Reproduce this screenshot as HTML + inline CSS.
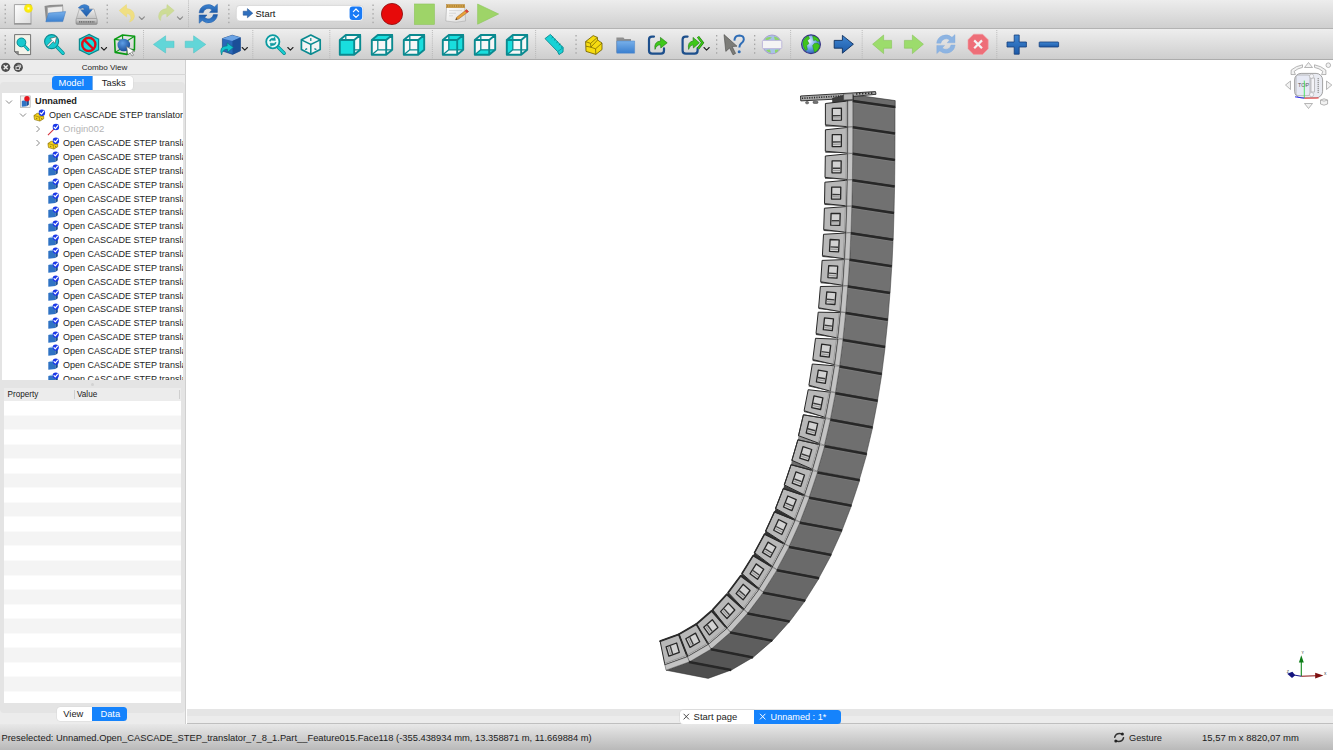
<!DOCTYPE html>
<html><head><meta charset="utf-8"><title>FreeCAD</title>
<style>
*{box-sizing:border-box;margin:0;padding:0}
html,body{width:1333px;height:750px;overflow:hidden;background:#fff}
body{font-family:"Liberation Sans",sans-serif;font-size:10.5px;color:#1a1a1a;position:relative}
.abs{position:absolute}
#tb1{left:0;top:0;width:1333px;height:29px;background:linear-gradient(#ededed,#cfcfcf);border-bottom:1px solid #b3b3b3}
#tb2{left:0;top:29px;width:1333px;height:31px;background:linear-gradient(#eeeeee,#cecece);border-bottom:1.4px solid #acacac}
.ic{position:absolute}
.dots{position:absolute;width:2px;border-left:1.5px dotted #a9a9a9}
#left{left:0;top:60px;width:186px;height:664px;background:#ececec;border-right:1px solid #d0d0d0}
#cvtitle{left:0;top:60px;width:186px;height:15px;border-bottom:1px solid #d6d6d6;text-align:center;font-size:8.1px;line-height:15.5px;padding-left:23px;color:#262626}
#pane{left:0;top:82px;width:185px;height:631px;background:#e4e4e4;border-radius:4px}
.seg{position:absolute;height:14px;line-height:14.5px;font-size:9.3px;text-align:center;background:#fff;color:#1a1a1a}
.seg.on{background:#1583fc;color:#fff}
#tree{left:2px;top:93px;width:181.3px;height:287px;background:#fff;overflow:hidden}
.row{position:absolute;left:0;height:14px;line-height:14px;white-space:nowrap;font-size:9.0px;color:#1c1c1c}
#prop{left:4px;top:388px;width:177px;height:315px;background:#fff;overflow:hidden;
 background-image:repeating-linear-gradient(#fff 0,#fff 14.55px,#f4f4f4 14.55px,#f4f4f4 29.1px);background-position:0 12.5px;background-repeat:repeat}
#prophead{left:4px;top:388px;width:177px;height:12.5px;background:#ececec;font-size:8.15px;line-height:13px}
#view{left:187px;top:60px;width:1146px;height:649px;background:#fff}
#mditabs{left:187px;top:709px;width:1146px;height:15px;background:linear-gradient(#e5e5e5 0,#e5e5e5 48%,#ececec 52%,#ececec 100%);border-bottom:1px solid #bfbfbf}
#status{left:0;top:724px;width:1333px;height:26px;background:linear-gradient(#e8e8e8,#b9b9b9);font-size:10.3px;line-height:27px}
</style></head><body>
<div id="tb1" class="abs"></div>
<div id="tb2" class="abs"></div>
<svg class="abs" style="left:0;top:0" width="1333" height="60" viewBox="0 0 1333 60">
<defs>
<linearGradient id="gb" x1="0" y1="0" x2="0" y2="1"><stop offset="0" stop-color="#78b0ea"/><stop offset="1" stop-color="#3a7fcf"/></linearGradient>
<linearGradient id="gb2" x1="0" y1="0" x2="0" y2="1"><stop offset="0" stop-color="#3f86d2"/><stop offset="1" stop-color="#1d5aa8"/></linearGradient>
<linearGradient id="gp" x1="0" y1="0" x2="1" y2="1"><stop offset="0" stop-color="#ffffff"/><stop offset="1" stop-color="#dcdcdc"/></linearGradient>
<linearGradient id="gg" x1="0" y1="0" x2="0" y2="1"><stop offset="0" stop-color="#e2e2e2"/><stop offset="1" stop-color="#8e8e8e"/></linearGradient>
<linearGradient id="gdrv" x1="0" y1="0" x2="0" y2="1"><stop offset="0" stop-color="#f0f0f0"/><stop offset="1" stop-color="#c2c2c2"/></linearGradient>
<radialGradient id="gy" cx="0.5" cy="0.5" r="0.5"><stop offset="0" stop-color="#fffde0"/><stop offset="0.45" stop-color="#fff200"/><stop offset="1" stop-color="#f4e000" stop-opacity="0.85"/></radialGradient>
<radialGradient id="gsph" cx="0.4" cy="0.35" r="0.7"><stop offset="0" stop-color="#5f9fe6"/><stop offset="1" stop-color="#164a96"/></radialGradient>
<radialGradient id="gglobe" cx="0.4" cy="0.35" r="0.75"><stop offset="0" stop-color="#e8f2ff"/><stop offset="0.5" stop-color="#6aa5e8"/><stop offset="1" stop-color="#1c4fa3"/></radialGradient>
</defs>
<rect x="4.6" y="4.5" width="1.3" height="1.5" fill="#a6a6a6"/><rect x="4.6" y="8.8" width="1.3" height="1.5" fill="#a6a6a6"/><rect x="4.6" y="13.1" width="1.3" height="1.5" fill="#a6a6a6"/><rect x="4.6" y="17.4" width="1.3" height="1.5" fill="#a6a6a6"/><rect x="4.6" y="21.7" width="1.3" height="1.5" fill="#a6a6a6"/>
<path d="M14.4 4.6 H31 V23.6 H14.4 Z" fill="url(#gp)" stroke="#9b9b9b" stroke-width="0.9"/><path d="M14 24 H31.4" stroke="#8a8a8a" stroke-width="1.1"/><circle cx="28.4" cy="8.4" r="4.3" fill="url(#gy)"/>
<path d="M44.5 6 L50 5 L63 4.6 L63.6 19 L46 21 Z" fill="#8d8d8d"/><path d="M47.5 7.4 L62.6 6.2 L62.8 18 L48 20 Z" fill="#ececec" stroke="#a5a5a5" stroke-width="0.5"/><path d="M48.6 13 L65.6 11.6 L62.8 21.6 L45.8 21.8 Z" fill="url(#gb)" stroke="#3f78bd" stroke-width="0.5"/>
<path d="M79.4 9 H94 L97 19 H76.2 Z" fill="url(#gdrv)" stroke="#9a9a9a" stroke-width="0.6"/><rect x="76" y="18.6" width="21.2" height="5.8" rx="1.2" fill="url(#gg)" stroke="#858585" stroke-width="0.6"/><path d="M79 21.8 H94.4" stroke="#5e5e5e" stroke-width="1.2" stroke-dasharray="1.2 0.6"/><path d="M78.2 7.8 Q83.6 2.2 88.8 6.2 L89.2 9.4 L92.4 9.4 L86.4 16.6 L80.6 9.8 L84.2 9.8 Q84 6.6 80.4 8.8 Z" fill="url(#gb2)" stroke="#2a62a8" stroke-width="0.4"/>
<rect x="106.6" y="4.5" width="1.3" height="1.5" fill="#a6a6a6"/><rect x="106.6" y="8.8" width="1.3" height="1.5" fill="#a6a6a6"/><rect x="106.6" y="13.1" width="1.3" height="1.5" fill="#a6a6a6"/><rect x="106.6" y="17.4" width="1.3" height="1.5" fill="#a6a6a6"/><rect x="106.6" y="21.7" width="1.3" height="1.5" fill="#a6a6a6"/>
<path d="M119.2 10.6 L126.4 4.6 L126.6 8.6 Q134.6 9.4 134.4 16.6 Q134 20.6 129.6 22 Q132 18 130.4 15.6 Q129 13.4 126.6 13.6 L126.6 17 Z" fill="#f1df7e" stroke="#ecd96a" stroke-width="0.5" opacity="0.95"/>
<path d="M139.2 16.9 l2.6 2.6 l2.6 -2.6" fill="none" stroke="#8c8c8c" stroke-width="1.1" stroke-linecap="round" stroke-linejoin="round"/>
<path d="M174.2 10.6 L167 4.6 L166.8 8.6 Q158.8 9.4 158.6 16.6 Q158.8 19.6 160.4 20.4 Q160.6 15.4 163.4 14.2 Q165 13.6 166.8 13.8 L166.8 17 Z" fill="#cddc93" stroke="#c3d484" stroke-width="0.5" opacity="0.95"/>
<path d="M177.4 16.9 l2.6 2.6 l2.6 -2.6" fill="none" stroke="#8c8c8c" stroke-width="1.1" stroke-linecap="round" stroke-linejoin="round"/>
<line x1="188.5" y1="0.5" x2="188.5" y2="28.5" stroke="#b4b4b4" stroke-width="0.9" stroke-dasharray="1 1.1"/>
<g fill="url(#gb2)" stroke="#1c58a4" stroke-width="0.5"><path d="M199.1 12.8 A9.2 9.2 0 0 1 214.4 6.9 L217.4 4.2 L217.4 12.4 L209.6 12.4 L211.9 9.9 A5.2 5.2 0 0 0 203.2 12.8 Z"/><path transform="rotate(180 208.3 13.7)" d="M199.1 12.8 A9.2 9.2 0 0 1 214.4 6.9 L217.4 4.2 L217.4 12.4 L209.6 12.4 L211.9 9.9 A5.2 5.2 0 0 0 203.2 12.8 Z"/></g>
<rect x="228.2" y="4.5" width="1.3" height="1.5" fill="#a6a6a6"/><rect x="228.2" y="8.8" width="1.3" height="1.5" fill="#a6a6a6"/><rect x="228.2" y="13.1" width="1.3" height="1.5" fill="#a6a6a6"/><rect x="228.2" y="17.4" width="1.3" height="1.5" fill="#a6a6a6"/><rect x="228.2" y="21.7" width="1.3" height="1.5" fill="#a6a6a6"/>
<rect x="236.3" y="5.4" width="127" height="15.6" rx="3.6" fill="#fff" stroke="#c9c9c9" stroke-width="0.6"/>
<path d="M243.2 11.2 H247.4 V8.6 L252.8 13.2 L247.4 17.8 V15.2 H243.2 Z" fill="#2f6fbe" stroke="#1b4a8c" stroke-width="0.5"/>
<text x="255.6" y="16.8" font-family="Liberation Sans, sans-serif" font-size="9.37" fill="#111">Start</text>
<rect x="349.6" y="6.4" width="12.6" height="13.6" rx="3" fill="#1a7bf6"/><path d="M353.4 11.6 L356 9 L358.6 11.6 M353.4 14.8 L356 17.4 L358.6 14.8" fill="none" stroke="#fff" stroke-width="1.2" stroke-linecap="round" stroke-linejoin="round"/>
<rect x="372.4" y="4.5" width="1.3" height="1.5" fill="#a6a6a6"/><rect x="372.4" y="8.8" width="1.3" height="1.5" fill="#a6a6a6"/><rect x="372.4" y="13.1" width="1.3" height="1.5" fill="#a6a6a6"/><rect x="372.4" y="17.4" width="1.3" height="1.5" fill="#a6a6a6"/><rect x="372.4" y="21.7" width="1.3" height="1.5" fill="#a6a6a6"/>
<circle cx="392" cy="14" r="10.6" fill="#e70a0a" stroke="#8c0a0a" stroke-width="0.8"/>
<rect x="414.4" y="4" width="20" height="20.4" fill="#9ed468" stroke="#8dc45a" stroke-width="0.6"/>
<path d="M446.6 6.4 H464.6 L465.6 21 Q456 23.4 445.8 21 Z" fill="url(#gp)" stroke="#aaa" stroke-width="0.6"/><rect x="446.4" y="4.4" width="18.4" height="3.4" fill="#d9a648" stroke="#a8792c" stroke-width="0.4"/><path d="M447 6 H464.4" stroke="#7a5a20" stroke-width="1" stroke-dasharray="0.8 1"/><path d="M449 10.6 H462 M449 13.2 H456 M449 15.8 H453" stroke="#c4c4c4" stroke-width="0.6"/><path d="M466.6 9.6 L468.6 11.6 L458.6 19 L455.6 19.8 L456.8 17.2 Z" fill="#e8a33a" stroke="#9c5a14" stroke-width="0.5"/><path d="M466.6 9.6 L468.6 11.6 L466.8 12.9 L464.9 10.9 Z" fill="#d94040"/><path d="M455.6 19.8 L456.4 18.2 L457.4 19.2 Z" fill="#222"/>
<path d="M477.6 4 L498.6 14 L477.6 24.2 Z" fill="#9ed468" stroke="#8cc65a" stroke-width="0.6"/>
<rect x="4.6" y="35.0" width="1.3" height="1.5" fill="#a6a6a6"/><rect x="4.6" y="39.3" width="1.3" height="1.5" fill="#a6a6a6"/><rect x="4.6" y="43.6" width="1.3" height="1.5" fill="#a6a6a6"/><rect x="4.6" y="47.9" width="1.3" height="1.5" fill="#a6a6a6"/><rect x="4.6" y="52.2" width="1.3" height="1.5" fill="#a6a6a6"/>
<path d="M14.6 34.6 H30.6 V54.6 H18.4 L14.6 51.6 Z" fill="#f3f3ea" stroke="#555" stroke-width="0.8"/><path d="M14.6 51.6 L18.4 51.4 L18.4 54.6 Z" fill="#8a8a8a" stroke="#555" stroke-width="0.5"/><line x1="24.4" y1="45.6" x2="28.2" y2="49.8" stroke="#0a8a90" stroke-width="2.8" stroke-linecap="round"/><line x1="24.4" y1="45.6" x2="28.2" y2="49.8" stroke="#19cfd2" stroke-width="1.6" stroke-linecap="round"/><circle cx="21.4" cy="42.4" r="4.4" fill="#17c9cf" stroke="#0a8a90" stroke-width="1"/>
<line x1="56.6" y1="46.6" x2="63" y2="53.2" stroke="#0a8a90" stroke-width="3.6" stroke-linecap="round"/><line x1="56.6" y1="46.6" x2="63" y2="53.2" stroke="#19cfd2" stroke-width="2.2" stroke-linecap="round"/><circle cx="51.6" cy="41.6" r="7" fill="#17c9cf" stroke="#0a8a90" stroke-width="1.1"/><path d="M47 45.4 L52 40.4 L50 38.4 L56.6 36.8 L55 43.4 L53.2 41.6 L48.2 46.6 Z" fill="#fff" stroke="#4a4a4a" stroke-width="0.6" stroke-linejoin="round"/>
<polygon points="89,34.4 98.6,39.2 98.6,49.8 89,54.6 79.4,49.8 79.4,39.2" fill="#18dede" stroke="#0a8a90" stroke-width="1.2"/><circle cx="88.8" cy="44.4" r="6.6" fill="none" stroke="#e0101a" stroke-width="2.4"/><line x1="84.2" y1="39.8" x2="93.4" y2="49" stroke="#e0101a" stroke-width="2.4"/>
<path d="M101.4 47.5 l2.6 2.6 l2.6 -2.6" fill="none" stroke="#222" stroke-width="1.1" stroke-linecap="round" stroke-linejoin="round"/>
<path d="M114.6 39.4 L122.6 35 L134.6 36.2 L134.4 49.8 L127 54.4 L115.2 52.4 Z" fill="none" stroke="#0a9a14" stroke-width="1.6" stroke-linejoin="round"/><path d="M114.6 39.4 L127 41 L134.6 36.2 M127 41 L127 54.4 M122.6 35 L122.6 47.6 L115.2 52.4 M122.6 47.6 L134.4 49.8" fill="none" stroke="#0a9a14" stroke-width="1.1"/><circle cx="123.8" cy="45" r="6.3" fill="url(#gsph)"/><path d="M126.6 46.6 L134.8 51.4 L131.6 52 L133.6 55.2 L132 56 L130.2 52.8 L128 54.8 Z" fill="#fff" stroke="#666" stroke-width="0.6"/>
<line x1="143.5" y1="30.0" x2="143.5" y2="58.5" stroke="#b4b4b4" stroke-width="0.9" stroke-dasharray="1 1.1"/>
<path d="M153.4 44.4 L165.6 35.8 V41.2 H174 V47.6 H165.6 V53 Z" fill="#62d6d8" stroke="#48c0c4" stroke-width="0.5"/>
<path d="M205.8 44.4 L193.6 35.8 V41.2 H185.2 V47.6 H193.6 V53 Z" fill="#62d6d8" stroke="#48c0c4" stroke-width="0.5"/>
<path d="M222.4 38.6 L232.2 35.2 L240.4 37.6 L240.4 50.8 L232.6 54.4 L222.4 51 Z" fill="#2a68b8" stroke="#123c78" stroke-width="0.6"/><path d="M222.4 38.6 L232.2 35.2 L240.4 37.6 L232.4 41 Z" fill="#6ba3e4"/><path d="M232.4 41 L240.4 37.6 L240.4 50.8 L232.6 54.4 Z" fill="#1b4f98"/><path d="M221.6 55 Q218.4 46.4 227.2 45.8 L227 42.8 L233.4 47.4 L227.6 52.2 L227.4 49.2 Q222.6 49 221.6 55 Z" fill="#12c4cc" stroke="#0a6e78" stroke-width="0.6"/>
<path d="M242.2 47.5 l2.6 2.6 l2.6 -2.6" fill="none" stroke="#222" stroke-width="1.1" stroke-linecap="round" stroke-linejoin="round"/>
<line x1="252.8" y1="30.0" x2="252.8" y2="58.5" stroke="#b4b4b4" stroke-width="0.9" stroke-dasharray="1 1.1"/>
<line x1="278.2" y1="47.2" x2="284.2" y2="53.2" stroke="#0a8a90" stroke-width="3.4" stroke-linecap="round"/><line x1="278.2" y1="47.2" x2="284.2" y2="53.2" stroke="#19cfd2" stroke-width="2" stroke-linecap="round"/><circle cx="272.8" cy="41.8" r="6.6" fill="#ecfbfb" stroke="#0a9aa0" stroke-width="1.8"/><path d="M269.4 41 Q270.2 37.8 273.6 38.2 L274.8 37 L275.4 40.4 L272 40.2 L272.8 39.4 Q271 39.4 270.6 41.2 Z M276.2 42.6 Q275.4 45.8 272 45.4 L270.8 46.6 L270.2 43.2 L273.6 43.4 L272.8 44.2 Q274.6 44.2 275 42.4 Z" fill="#0aa0a8" stroke="#0a8a90" stroke-width="0.5"/>
<path d="M287.8 47.5 l2.6 2.6 l2.6 -2.6" fill="none" stroke="#222" stroke-width="1.1" stroke-linecap="round" stroke-linejoin="round"/>
<polygon points="310.8,35.0 320.2,39.8 320.2,49.4 310.8,54.2 301.4,49.4 301.4,39.8" fill="#f4f4f4" stroke="#0a8a90" stroke-width="1.7" stroke-linejoin="round"/><path d="M301.4 39.8 L310.8 44.4 L320.2 39.8 M310.8 44.4 L310.8 54.2" fill="none" stroke="#0a8a90" stroke-width="1.5"/><path d="M310.8 38.0 V41.0 M305.2 49.6 l2 -1 M316.4 49.6 l-2 -1" stroke="#0a8a90" stroke-width="1.2"/>
<line x1="329.8" y1="30.0" x2="329.8" y2="58.5" stroke="#b4b4b4" stroke-width="0.9" stroke-dasharray="1 1.1"/>
<polygon points="339.8,40.0 345.8,35.0 360.2,35.0 360.2,49.8 354.2,54.8 339.8,54.8" fill="#f7f7f7"/><path d="M345.8 35.0 L345.8 49.8 L360.2 49.8 M345.8 49.8 L339.8 54.8" fill="none" stroke="#0a8a90" stroke-width="1.3"/><polygon points="339.8,40.0 354.2,40.0 354.2,54.8 339.8,54.8" fill="#19dede"/><path d="M339.8 40.0 L354.2 40.0 M354.2 40.0 L354.2 54.8 M354.2 54.8 L339.8 54.8 M339.8 54.8 L339.8 40.0 M339.8 40.0 L345.8 35.0 M345.8 35.0 L360.2 35.0 M360.2 35.0 L354.2 40.0 M360.2 35.0 L360.2 49.8 M360.2 49.8 L354.2 54.8 " fill="none" stroke="#0a8a90" stroke-width="1.9" stroke-linejoin="round" stroke-linecap="round"/>
<polygon points="371.8,40.0 377.8,35.0 392.2,35.0 392.2,49.8 386.2,54.8 371.8,54.8" fill="#f7f7f7"/><path d="M377.8 35.0 L377.8 49.8 L392.2 49.8 M377.8 49.8 L371.8 54.8" fill="none" stroke="#0a8a90" stroke-width="1.3"/><polygon points="371.8,40.0 377.8,35.0 392.2,35.0 386.2,40.0" fill="#19dede"/><path d="M371.8 40.0 L386.2 40.0 M386.2 40.0 L386.2 54.8 M386.2 54.8 L371.8 54.8 M371.8 54.8 L371.8 40.0 M371.8 40.0 L377.8 35.0 M377.8 35.0 L392.2 35.0 M392.2 35.0 L386.2 40.0 M392.2 35.0 L392.2 49.8 M392.2 49.8 L386.2 54.8 " fill="none" stroke="#0a8a90" stroke-width="1.9" stroke-linejoin="round" stroke-linecap="round"/>
<polygon points="403.8,40.0 409.8,35.0 424.2,35.0 424.2,49.8 418.2,54.8 403.8,54.8" fill="#f7f7f7"/><path d="M409.8 35.0 L409.8 49.8 L424.2 49.8 M409.8 49.8 L403.8 54.8" fill="none" stroke="#0a8a90" stroke-width="1.3"/><polygon points="418.2,40.0 424.2,35.0 424.2,49.8 418.2,54.8" fill="#19dede"/><path d="M403.8 40.0 L418.2 40.0 M418.2 40.0 L418.2 54.8 M418.2 54.8 L403.8 54.8 M403.8 54.8 L403.8 40.0 M403.8 40.0 L409.8 35.0 M409.8 35.0 L424.2 35.0 M424.2 35.0 L418.2 40.0 M424.2 35.0 L424.2 49.8 M424.2 49.8 L418.2 54.8 " fill="none" stroke="#0a8a90" stroke-width="1.9" stroke-linejoin="round" stroke-linecap="round"/>
<line x1="432.4" y1="30.0" x2="432.4" y2="58.5" stroke="#b4b4b4" stroke-width="0.9" stroke-dasharray="1 1.1"/>
<polygon points="442.8,40.0 448.8,35.0 463.2,35.0 463.2,49.8 457.2,54.8 442.8,54.8" fill="#f7f7f7"/><polygon points="448.8,35.0 463.2,35.0 463.2,49.8 448.8,49.8" fill="#19dede"/><path d="M448.8 35.0 L448.8 49.8 L463.2 49.8 M448.8 49.8 L442.8 54.8" fill="none" stroke="#0a8a90" stroke-width="1.3"/><path d="M442.8 40.0 L457.2 40.0 M457.2 40.0 L457.2 54.8 M457.2 54.8 L442.8 54.8 M442.8 54.8 L442.8 40.0 M442.8 40.0 L448.8 35.0 M448.8 35.0 L463.2 35.0 M463.2 35.0 L457.2 40.0 M463.2 35.0 L463.2 49.8 M463.2 49.8 L457.2 54.8 " fill="none" stroke="#0a8a90" stroke-width="1.9" stroke-linejoin="round" stroke-linecap="round"/>
<polygon points="474.8,40.0 480.8,35.0 495.2,35.0 495.2,49.8 489.2,54.8 474.8,54.8" fill="#f7f7f7"/><polygon points="474.8,54.8 480.8,49.8 495.2,49.8 489.2,54.8" fill="#19dede"/><path d="M480.8 35.0 L480.8 49.8 L495.2 49.8 M480.8 49.8 L474.8 54.8" fill="none" stroke="#0a8a90" stroke-width="1.3"/><path d="M474.8 40.0 L489.2 40.0 M489.2 40.0 L489.2 54.8 M489.2 54.8 L474.8 54.8 M474.8 54.8 L474.8 40.0 M474.8 40.0 L480.8 35.0 M480.8 35.0 L495.2 35.0 M495.2 35.0 L489.2 40.0 M495.2 35.0 L495.2 49.8 M495.2 49.8 L489.2 54.8 " fill="none" stroke="#0a8a90" stroke-width="1.9" stroke-linejoin="round" stroke-linecap="round"/>
<polygon points="506.8,40.0 512.8,35.0 527.2,35.0 527.2,49.8 521.2,54.8 506.8,54.8" fill="#f7f7f7"/><polygon points="506.8,40.0 512.8,35.0 512.8,49.8 506.8,54.8" fill="#19dede"/><path d="M512.8 35.0 L512.8 49.8 L527.2 49.8 M512.8 49.8 L506.8 54.8" fill="none" stroke="#0a8a90" stroke-width="1.3"/><path d="M506.8 40.0 L521.2 40.0 M521.2 40.0 L521.2 54.8 M521.2 54.8 L506.8 54.8 M506.8 54.8 L506.8 40.0 M506.8 40.0 L512.8 35.0 M512.8 35.0 L527.2 35.0 M527.2 35.0 L521.2 40.0 M527.2 35.0 L527.2 49.8 M527.2 49.8 L521.2 54.8 " fill="none" stroke="#0a8a90" stroke-width="1.9" stroke-linejoin="round" stroke-linecap="round"/>
<line x1="535.6" y1="30.0" x2="535.6" y2="58.5" stroke="#b4b4b4" stroke-width="0.9" stroke-dasharray="1 1.1"/>
<path d="M545 38.6 L550.4 34.4 L563.2 47.6 L563 52 L559 54.6 L557.6 51.6 Z" fill="#17d2d6" stroke="#0a8a90" stroke-width="0.9"/><path d="M557.6 51.6 L563.2 47.6" stroke="#0a8a90" stroke-width="0.7"/><path d="M551.6 38 l1.6 -1.4 M554 40.4 l1.6 -1.4 M556.4 42.8 l1.6 -1.4 M558.8 45.2 l1.6 -1.4 M561 47.6 l1.4 -1.2" stroke="#0a6e74" stroke-width="0.7"/>
<rect x="575.4" y="35.0" width="1.3" height="1.5" fill="#a6a6a6"/><rect x="575.4" y="39.3" width="1.3" height="1.5" fill="#a6a6a6"/><rect x="575.4" y="43.6" width="1.3" height="1.5" fill="#a6a6a6"/><rect x="575.4" y="47.9" width="1.3" height="1.5" fill="#a6a6a6"/><rect x="575.4" y="52.2" width="1.3" height="1.5" fill="#a6a6a6"/>
<path d="M585.6 41.6 L593.2 35.6 L597.4 37.4 L597.6 40 L602 43 L602 49.6 L595.8 54.4 L586 51.4 Z" fill="#f6dc10" stroke="#6b5a00" stroke-width="0.8" stroke-linejoin="round"/><path d="M585.6 41.6 L590.6 43.4 L597.4 37.4 M590.6 43.4 L590.8 47.2 L586 46.2 M590.8 47.2 L595.6 48.8 L602 43 M595.6 48.8 L595.8 54.4 M590.8 47.2 L597.6 40" fill="none" stroke="#6b5a00" stroke-width="0.7"/>
<path d="M616.4 37.4 H623.4 L624.6 39 H631 V52.4 H616.4 Z" fill="#8f8f8f"/><path d="M616.8 41 H634.6 V53.2 H616.8 Z" fill="url(#gb)" stroke="#4a84c8" stroke-width="0.5"/>
<path d="M654.0 36.6 H652.0 Q649.0 36.6 649.0 39.6 V50.4 Q649.0 53.6 652.2 53.6 H661.0 Q664.0 53.6 664.0 50.4 V48.4" fill="none" stroke="#1d4f8c" stroke-width="2.2" stroke-linecap="round"/>
<path d="M655 49.4 Q653.6 41.6 660.6 41 L660.4 37.4 L667.2 42.8 L660.8 48 L660.6 44.8 Q656.4 44.8 655 49.4 Z" fill="#3fc81a" stroke="#1a7a0a" stroke-width="0.6"/>
<path d="M687.6 36.6 H685.6 Q682.6 36.6 682.6 39.6 V50.4 Q682.6 53.6 685.8 53.6 H694.6 Q697.6 53.6 697.6 50.4 V48.4" fill="none" stroke="#1d4f8c" stroke-width="2.2" stroke-linecap="round"/>
<path d="M688.6 49.4 Q687.2 41.6 693.2 41 L693 37.4 L699.4 42.8 L693.4 48 L693.2 44.8 Q690 44.8 688.6 49.4 Z" fill="#3fc81a" stroke="#1a7a0a" stroke-width="0.6"/><path d="M698 36.8 L702.6 42.8 L698 48.6" fill="none" stroke="#1a7a0a" stroke-width="2.6"/><path d="M698 36.8 L702.6 42.8 L698 48.6" fill="none" stroke="#3fc81a" stroke-width="1.4"/>
<path d="M704.0 47.5 l2.6 2.6 l2.6 -2.6" fill="none" stroke="#222" stroke-width="1.1" stroke-linecap="round" stroke-linejoin="round"/>
<rect x="716.0" y="35.0" width="1.3" height="1.5" fill="#a6a6a6"/><rect x="716.0" y="39.3" width="1.3" height="1.5" fill="#a6a6a6"/><rect x="716.0" y="43.6" width="1.3" height="1.5" fill="#a6a6a6"/><rect x="716.0" y="47.9" width="1.3" height="1.5" fill="#a6a6a6"/><rect x="716.0" y="52.2" width="1.3" height="1.5" fill="#a6a6a6"/>
<path d="M724 34.6 L737 46.2 L732.2 46.6 L735.6 53.4 L733 54.8 L729.6 48 L725.8 51.4 Z" fill="#7c7c78" stroke="#4a4a48" stroke-width="0.6"/><path d="M734.4 40.6 Q734.6 35.4 739.4 35.4 Q744 35.6 743.8 39.6 Q743.6 42 741 43.6 Q739.4 44.8 739.4 47.4" fill="none" stroke="#2f6db6" stroke-width="2"/><circle cx="739.2" cy="51.8" r="1.5" fill="#2f6db6"/>
<rect x="754.0" y="35.0" width="1.3" height="1.5" fill="#a6a6a6"/><rect x="754.0" y="39.3" width="1.3" height="1.5" fill="#a6a6a6"/><rect x="754.0" y="43.6" width="1.3" height="1.5" fill="#a6a6a6"/><rect x="754.0" y="47.9" width="1.3" height="1.5" fill="#a6a6a6"/><rect x="754.0" y="52.2" width="1.3" height="1.5" fill="#a6a6a6"/>
<circle cx="772" cy="44.4" r="9.4" fill="#a7c3e6" stroke="#a99fd0" stroke-width="1"/><path d="M765 39 Q768 36 772 37.4 Q770 39.6 766.6 40.4 Z M774 36.4 Q778.4 37 779.6 40 L775 40.4 Z M766 50 L770 49.6 L771 52.8 Q767.6 52.6 766 50 Z M775 49.8 L779 49.4 Q777.6 52.4 775 53 Z" fill="#8fd46a"/><rect x="762.4" y="40.4" width="19.4" height="8.2" rx="1" fill="#f4f4f4" stroke="#b8b0d8" stroke-width="0.8"/>
<line x1="790.6" y1="30.0" x2="790.6" y2="58.5" stroke="#b4b4b4" stroke-width="0.9" stroke-dasharray="1 1.1"/>
<circle cx="811" cy="44.2" r="9.4" fill="url(#gglobe)" stroke="#3b3486" stroke-width="1.2"/><path d="M803 41.6 Q804.4 37.4 808.4 36 L809.6 38.6 L807.4 40.6 L809 43.4 L806.6 45.6 L807.4 49.4 L805.6 50.6 Q802.2 46.6 803 41.6 Z" fill="#3fc41c" stroke="#1a7a0a" stroke-width="0.4"/><path d="M812.6 35.8 Q817.8 36.6 819.6 41 L817.4 41.6 L815.6 40 L813.6 40.6 Z M814.4 43.4 L817.6 43 L819.8 45.6 Q818.8 50.6 814.6 52.6 L813.4 48.6 L812.6 45.6 Z" fill="#3fc41c" stroke="#1a7a0a" stroke-width="0.4"/>
<path d="M853.4 44.2 L842.4 35.4 V40.4 H834.2 V48.2 H842.4 V53.2 Z" fill="url(#gb2)" stroke="#0d2f5e" stroke-width="0.9" stroke-linejoin="round"/>
<line x1="862.2" y1="30.0" x2="862.2" y2="58.5" stroke="#b4b4b4" stroke-width="0.9" stroke-dasharray="1 1.1"/>
<path d="M872.6 44.2 L883.6 35 V40.4 H891.6 V48.2 H883.6 V53.6 Z" fill="#9cdc6c" stroke="#86c458" stroke-width="0.6"/>
<path d="M923.4 44.2 L912.4 35 V40.4 H904.4 V48.2 H912.4 V53.6 Z" fill="#9cdc6c" stroke="#86c458" stroke-width="0.6"/>
<g transform="translate(737.6,30.4)" fill="#8db4e2" stroke="#84acdc" stroke-width="0.4"><path d="M199.1 12.8 A9.2 9.2 0 0 1 214.4 6.9 L217.4 4.2 L217.4 12.4 L209.6 12.4 L211.9 9.9 A5.2 5.2 0 0 0 203.2 12.8 Z"/><path transform="rotate(180 208.3 13.7)" d="M199.1 12.8 A9.2 9.2 0 0 1 214.4 6.9 L217.4 4.2 L217.4 12.4 L209.6 12.4 L211.9 9.9 A5.2 5.2 0 0 0 203.2 12.8 Z"/></g>
<polygon points="973.6,34.2 982.6,34.2 988.2,39.8 988.2,48.8 982.6,54.4 973.6,54.4 968,48.8 968,39.8" fill="#ee6e78" stroke="#f2a0a6" stroke-width="0.6"/><path d="M974.2 40.4 L982 48.2 M982 40.4 L974.2 48.2" stroke="#f4f4f4" stroke-width="2.2"/>
<line x1="996.8" y1="30.0" x2="996.8" y2="58.5" stroke="#b4b4b4" stroke-width="0.9" stroke-dasharray="1 1.1"/>
<path d="M1014.2 35 H1019.2 V42 H1026.4 V47 H1019.2 V54.2 H1014.2 V47 H1007 V42 H1014.2 Z" fill="url(#gb2)" stroke="#143e78" stroke-width="0.8" stroke-linejoin="round"/>
<rect x="1039.2" y="42" width="19.4" height="5" rx="0.6" fill="url(#gb2)" stroke="#143e78" stroke-width="0.8"/>
</svg>
<div id="view" class="abs"></div>
<svg id="model" width="1145" height="648" viewBox="188 60 1145 648" style="position:absolute;left:188px;top:60px">
<g id="frame">
<polygon points="853.2,94.8 895.2,100.6 895.2,108.0 853.2,101.2" fill="#6b6b6b" stroke="#2b2b2b" stroke-width="0.6" stroke-linejoin="round"/>
<polygon points="800.5,96.0 875.5,91.6 876.0,94.3 851.0,96.7 832.0,99.3 800.8,100.9" fill="#a9a9a9" stroke="#262626" stroke-width="0.9" stroke-linejoin="round"/>
<line x1="802" y1="98.3" x2="848" y2="95.6" stroke="#2a2a2a" stroke-width="1.6" stroke-dasharray="1.1 1.3"/>
<line x1="856" y1="94.0" x2="874" y2="92.9" stroke="#2a2a2a" stroke-width="1.6" stroke-dasharray="1.4 1.6"/>
<polygon points="832.6,98.2 843.5,95.4 853.4,94.8 853.4,101.4 846.0,102.0 832.6,103.0" fill="#3e3e3e" stroke="#262626" stroke-width="0.6" stroke-linejoin="round"/>
<polygon points="843.6,94.0 852.8,93.6 852.8,99.6 843.6,100.0" fill="#b4b4b4" stroke="#3a3a3a" stroke-width="0.5" stroke-linejoin="round"/>
<rect x="805.6" y="101.6" width="3" height="2.2" rx="1" fill="#777" stroke="#333" stroke-width="0.5"/>
<rect x="813" y="101.2" width="5" height="2.2" rx="1" fill="#777" stroke="#333" stroke-width="0.5"/>
</g>
<polygon points="825.4,124.9 825.4,126.4 847.8,126.7" fill="#4a4a4a"/>
<polygon points="825.3,151.2 825.3,152.7 847.7,153.1" fill="#4a4a4a"/>
<polygon points="825.0,177.4 825.0,178.8 847.4,179.5" fill="#4a4a4a"/>
<polygon points="824.5,203.6 824.5,205.0 846.8,205.9" fill="#4a4a4a"/>
<polygon points="823.7,229.6 823.6,231.0 846.0,232.3" fill="#4a4a4a"/>
<polygon points="822.4,255.7 822.3,257.1 844.7,258.8" fill="#4a4a4a"/>
<polygon points="820.7,281.8 820.6,283.2 842.9,285.3" fill="#4a4a4a"/>
<polygon points="818.6,307.8 818.5,309.1 840.7,311.7" fill="#4a4a4a"/>
<polygon points="816.0,333.5 815.8,335.0 837.9,338.1" fill="#4a4a4a"/>
<polygon points="812.8,359.6 812.6,360.9 834.7,364.7" fill="#4a4a4a"/>
<polygon points="808.9,385.2 808.7,386.5 830.5,391.2" fill="#4a4a4a"/>
<polygon points="804.1,410.7 803.9,411.9 825.6,417.5" fill="#4a4a4a"/>
<polygon points="798.5,435.7 797.9,439.8 819.8,444.7 819.6,443.5" fill="#949494"/>
<polygon points="791.9,460.3 791.1,464.7 812.8,470.6 812.7,469.4" fill="#6e6e6e"/>
<polygon points="784.3,484.9 783.3,488.6 804.6,495.8 804.7,495.0" fill="#414141"/>
<polygon points="775.6,508.4 774.5,511.8 795.3,520.3 795.4,519.6" fill="#323232"/>
<polygon points="765.7,531.1 764.5,534.1 784.7,544.2 784.8,543.6" fill="#323232"/>
<polygon points="754.5,552.7 753.1,555.6 772.6,567.3 772.7,566.6" fill="#323232"/>
<polygon points="742.0,573.5 740.7,575.8 759.2,589.3 759.2,588.7" fill="#323232"/>
<polygon points="728.2,592.5 726.7,594.3 743.9,609.7 744.1,609.4" fill="#323232"/>
<polygon points="712.8,609.7 711.7,610.8 727.0,628.4 727.1,628.2" fill="#323232"/>
<polygon points="696.2,624.3 696.3,624.1 708.4,644.5 708.3,644.6" fill="#323232"/>
<polygon points="678.9,634.3 678.8,634.4 687.4,656.8 687.4,656.8" fill="#323232"/>
<polygon points="852.8,100.4 895.0,106.6 895.0,133.3 852.8,127.1" fill="#717171" stroke="#333" stroke-width="0.5" stroke-linejoin="round"/>
<line x1="852.8" y1="102.6" x2="895.0" y2="108.8" stroke="#7f7f7f" stroke-width="0.7" stroke-linecap="butt"/>
<polygon points="847.8,101.0 825.4,103.5 825.4,124.9 847.8,126.7" fill="#b8b8b8" stroke="#262626" stroke-width="1.0" stroke-linejoin="round"/>
<polygon points="852.8,100.4 847.8,101.0 847.8,126.7 852.8,127.1" fill="#c3c3c3" stroke="#4a4a4a" stroke-width="0.5" stroke-linejoin="round"/>
<line x1="846.3" y1="101.3" x2="846.3" y2="126.4" stroke="#8a8a8a" stroke-width="0.6" stroke-linecap="round"/>
<line x1="852.8" y1="100.9" x2="895.0" y2="107.1" stroke="#272727" stroke-width="2.5" stroke-linecap="butt"/>
<polygon points="832.3,108.3 841.4,108.2 841.4,120.1 832.3,120.3" fill="#d2d2d2" stroke="#262626" stroke-width="1.3" stroke-linejoin="round"/>
<line x1="833.0" y1="115.7" x2="840.6" y2="115.6" stroke="#3a3a3a" stroke-width="1.4" stroke-linecap="butt"/>
<line x1="833.0" y1="117.9" x2="840.6" y2="117.8" stroke="#9a9a9a" stroke-width="1.2" stroke-linecap="butt"/>
<polygon points="852.8,126.8 895.0,133.1 894.9,159.8 852.7,153.5" fill="#717171" stroke="#333" stroke-width="0.5" stroke-linejoin="round"/>
<line x1="852.8" y1="129.0" x2="895.0" y2="135.3" stroke="#7f7f7f" stroke-width="0.7" stroke-linecap="butt"/>
<polygon points="847.8,127.4 825.4,129.8 825.3,151.2 847.7,153.1" fill="#b8b8b8" stroke="#262626" stroke-width="1.0" stroke-linejoin="round"/>
<polygon points="852.8,126.8 847.8,127.4 847.7,153.1 852.7,153.5" fill="#c3c3c3" stroke="#4a4a4a" stroke-width="0.5" stroke-linejoin="round"/>
<line x1="846.3" y1="127.7" x2="846.2" y2="152.8" stroke="#8a8a8a" stroke-width="0.6" stroke-linecap="round"/>
<line x1="852.8" y1="127.3" x2="895.0" y2="133.6" stroke="#272727" stroke-width="2.5" stroke-linecap="butt"/>
<polygon points="832.3,134.7 841.4,134.6 841.3,146.5 832.2,146.6" fill="#d2d2d2" stroke="#262626" stroke-width="1.3" stroke-linejoin="round"/>
<line x1="833.0" y1="142.0" x2="840.6" y2="141.9" stroke="#3a3a3a" stroke-width="1.4" stroke-linecap="butt"/>
<line x1="833.0" y1="144.3" x2="840.6" y2="144.2" stroke="#9a9a9a" stroke-width="1.2" stroke-linecap="butt"/>
<polygon points="852.7,153.3 894.9,159.5 894.6,186.2 852.4,179.9" fill="#717171" stroke="#333" stroke-width="0.5" stroke-linejoin="round"/>
<line x1="852.7" y1="155.5" x2="894.9" y2="161.8" stroke="#7f7f7f" stroke-width="0.7" stroke-linecap="butt"/>
<polygon points="847.7,153.8 825.3,156.0 825.0,177.4 847.4,179.5" fill="#b8b8b8" stroke="#262626" stroke-width="1.0" stroke-linejoin="round"/>
<polygon points="852.7,153.3 847.7,153.8 847.4,179.5 852.4,179.9" fill="#c3c3c3" stroke="#4a4a4a" stroke-width="0.5" stroke-linejoin="round"/>
<line x1="846.2" y1="154.1" x2="845.9" y2="179.1" stroke="#8a8a8a" stroke-width="0.6" stroke-linecap="round"/>
<line x1="852.7" y1="153.8" x2="894.9" y2="160.0" stroke="#272727" stroke-width="2.5" stroke-linecap="butt"/>
<polygon points="832.1,160.9 841.2,160.9 841.0,172.8 832.0,172.8" fill="#d2d2d2" stroke="#262626" stroke-width="1.3" stroke-linejoin="round"/>
<line x1="832.7" y1="168.3" x2="840.4" y2="168.2" stroke="#3a3a3a" stroke-width="1.4" stroke-linecap="butt"/>
<line x1="832.7" y1="170.5" x2="840.3" y2="170.5" stroke="#9a9a9a" stroke-width="1.2" stroke-linecap="butt"/>
<polygon points="852.4,179.7 894.6,186.0 894.0,212.7 851.8,206.3" fill="#717171" stroke="#333" stroke-width="0.5" stroke-linejoin="round"/>
<line x1="852.3" y1="181.9" x2="894.5" y2="188.2" stroke="#7f7f7f" stroke-width="0.7" stroke-linecap="butt"/>
<polygon points="847.4,180.2 824.9,182.2 824.5,203.6 846.8,205.9" fill="#b8b8b8" stroke="#262626" stroke-width="1.0" stroke-linejoin="round"/>
<polygon points="852.4,179.7 847.4,180.2 846.8,205.9 851.8,206.3" fill="#c3c3c3" stroke="#4a4a4a" stroke-width="0.5" stroke-linejoin="round"/>
<line x1="845.9" y1="180.5" x2="845.4" y2="205.5" stroke="#8a8a8a" stroke-width="0.6" stroke-linecap="round"/>
<line x1="852.4" y1="180.2" x2="894.6" y2="186.5" stroke="#272727" stroke-width="2.5" stroke-linecap="butt"/>
<polygon points="831.7,187.1 840.8,187.2 840.6,199.1 831.5,199.1" fill="#d2d2d2" stroke="#262626" stroke-width="1.3" stroke-linejoin="round"/>
<line x1="832.3" y1="194.5" x2="839.9" y2="194.6" stroke="#3a3a3a" stroke-width="1.4" stroke-linecap="butt"/>
<line x1="832.3" y1="196.7" x2="839.9" y2="196.8" stroke="#9a9a9a" stroke-width="1.2" stroke-linecap="butt"/>
<polygon points="851.8,206.1 894.0,212.5 893.2,239.2 851.0,232.8" fill="#717171" stroke="#333" stroke-width="0.5" stroke-linejoin="round"/>
<line x1="851.8" y1="208.3" x2="894.0" y2="214.7" stroke="#7f7f7f" stroke-width="0.7" stroke-linecap="butt"/>
<polygon points="846.8,206.5 824.4,208.2 823.7,229.6 846.0,232.3" fill="#b8b8b8" stroke="#262626" stroke-width="1.0" stroke-linejoin="round"/>
<polygon points="851.8,206.1 846.8,206.5 846.0,232.3 851.0,232.8" fill="#c3c3c3" stroke="#4a4a4a" stroke-width="0.5" stroke-linejoin="round"/>
<line x1="845.3" y1="206.8" x2="844.5" y2="231.8" stroke="#8a8a8a" stroke-width="0.6" stroke-linecap="round"/>
<line x1="851.8" y1="206.6" x2="894.0" y2="213.0" stroke="#272727" stroke-width="2.5" stroke-linecap="butt"/>
<polygon points="831.1,213.3 840.2,213.5 839.8,225.4 830.7,225.2" fill="#d2d2d2" stroke="#262626" stroke-width="1.3" stroke-linejoin="round"/>
<line x1="831.6" y1="220.7" x2="839.2" y2="220.8" stroke="#3a3a3a" stroke-width="1.4" stroke-linecap="butt"/>
<line x1="831.5" y1="222.9" x2="839.1" y2="223.0" stroke="#9a9a9a" stroke-width="1.2" stroke-linecap="butt"/>
<polygon points="850.9,232.7 893.1,239.1 891.9,265.8 849.7,259.4" fill="#717171" stroke="#333" stroke-width="0.5" stroke-linejoin="round"/>
<line x1="850.8" y1="235.0" x2="893.0" y2="241.4" stroke="#7f7f7f" stroke-width="0.7" stroke-linecap="butt"/>
<polygon points="845.9,233.0 823.5,234.3 822.4,255.7 844.7,258.8" fill="#b8b8b8" stroke="#262626" stroke-width="1.0" stroke-linejoin="round"/>
<polygon points="850.9,232.7 845.9,233.0 844.7,258.8 849.7,259.4" fill="#c3c3c3" stroke="#4a4a4a" stroke-width="0.5" stroke-linejoin="round"/>
<line x1="844.4" y1="233.3" x2="843.2" y2="258.3" stroke="#8a8a8a" stroke-width="0.6" stroke-linecap="round"/>
<line x1="850.9" y1="233.2" x2="893.1" y2="239.7" stroke="#272727" stroke-width="2.5" stroke-linecap="butt"/>
<polygon points="830.1,239.5 839.2,239.9 838.6,251.8 829.5,251.4" fill="#d2d2d2" stroke="#262626" stroke-width="1.3" stroke-linejoin="round"/>
<line x1="830.5" y1="246.9" x2="838.1" y2="247.2" stroke="#3a3a3a" stroke-width="1.4" stroke-linecap="butt"/>
<line x1="830.4" y1="249.1" x2="838.0" y2="249.4" stroke="#9a9a9a" stroke-width="1.2" stroke-linecap="butt"/>
<polygon points="849.6,259.3 891.8,265.8 890.1,292.5 847.9,286.0" fill="#717171" stroke="#333" stroke-width="0.5" stroke-linejoin="round"/>
<line x1="849.5" y1="261.6" x2="891.7" y2="268.0" stroke="#7f7f7f" stroke-width="0.7" stroke-linecap="butt"/>
<polygon points="844.6,259.6 822.1,260.4 820.7,281.8 842.9,285.3" fill="#b8b8b8" stroke="#262626" stroke-width="1.0" stroke-linejoin="round"/>
<polygon points="849.6,259.3 844.6,259.6 842.9,285.3 847.9,286.0" fill="#c3c3c3" stroke="#4a4a4a" stroke-width="0.5" stroke-linejoin="round"/>
<line x1="843.1" y1="259.8" x2="841.5" y2="284.8" stroke="#8a8a8a" stroke-width="0.6" stroke-linecap="round"/>
<line x1="849.6" y1="259.8" x2="891.8" y2="266.3" stroke="#272727" stroke-width="2.5" stroke-linecap="butt"/>
<polygon points="828.7,265.7 837.7,266.2 837.0,278.1 827.9,277.6" fill="#d2d2d2" stroke="#262626" stroke-width="1.3" stroke-linejoin="round"/>
<line x1="828.9" y1="273.1" x2="836.5" y2="273.6" stroke="#3a3a3a" stroke-width="1.4" stroke-linecap="butt"/>
<line x1="828.8" y1="275.3" x2="836.4" y2="275.8" stroke="#9a9a9a" stroke-width="1.2" stroke-linecap="butt"/>
<polygon points="847.8,285.9 890.0,292.4 887.9,319.3 845.7,312.5" fill="#717171" stroke="#333" stroke-width="0.5" stroke-linejoin="round"/>
<line x1="847.7" y1="288.2" x2="889.9" y2="294.7" stroke="#7f7f7f" stroke-width="0.7" stroke-linecap="butt"/>
<polygon points="842.8,286.1 820.4,286.5 818.6,307.8 840.7,311.7" fill="#b8b8b8" stroke="#262626" stroke-width="1.0" stroke-linejoin="round"/>
<polygon points="847.8,285.9 842.8,286.1 840.7,311.7 845.7,312.5" fill="#c3c3c3" stroke="#4a4a4a" stroke-width="0.5" stroke-linejoin="round"/>
<line x1="841.3" y1="286.2" x2="839.3" y2="311.2" stroke="#8a8a8a" stroke-width="0.6" stroke-linecap="round"/>
<line x1="847.8" y1="286.4" x2="890.0" y2="292.9" stroke="#272727" stroke-width="2.5" stroke-linecap="butt"/>
<polygon points="826.8,291.9 835.9,292.6 834.9,304.5 825.8,303.8" fill="#d2d2d2" stroke="#262626" stroke-width="1.3" stroke-linejoin="round"/>
<line x1="827.0" y1="299.3" x2="834.5" y2="299.9" stroke="#3a3a3a" stroke-width="1.4" stroke-linecap="butt"/>
<line x1="826.8" y1="301.5" x2="834.4" y2="302.1" stroke="#9a9a9a" stroke-width="1.2" stroke-linecap="butt"/>
<polygon points="845.7,312.5 887.9,319.3 885.1,346.0 842.9,339.0" fill="#717171" stroke="#333" stroke-width="0.5" stroke-linejoin="round"/>
<line x1="845.4" y1="314.7" x2="887.6" y2="321.5" stroke="#7f7f7f" stroke-width="0.7" stroke-linecap="butt"/>
<polygon points="840.6,312.5 818.2,312.2 816.0,333.5 837.9,338.1" fill="#b8b8b8" stroke="#262626" stroke-width="1.0" stroke-linejoin="round"/>
<polygon points="845.7,312.5 840.6,312.5 837.9,338.1 842.9,339.0" fill="#c3c3c3" stroke="#4a4a4a" stroke-width="0.5" stroke-linejoin="round"/>
<line x1="839.1" y1="312.6" x2="836.5" y2="337.5" stroke="#8a8a8a" stroke-width="0.6" stroke-linecap="round"/>
<line x1="845.6" y1="313.0" x2="887.8" y2="319.8" stroke="#272727" stroke-width="2.5" stroke-linecap="butt"/>
<polygon points="824.5,317.9 833.5,318.8 832.3,330.7 823.3,329.7" fill="#d2d2d2" stroke="#262626" stroke-width="1.3" stroke-linejoin="round"/>
<line x1="824.5" y1="325.3" x2="832.0" y2="326.1" stroke="#3a3a3a" stroke-width="1.4" stroke-linecap="butt"/>
<line x1="824.2" y1="327.5" x2="831.8" y2="328.3" stroke="#9a9a9a" stroke-width="1.2" stroke-linecap="butt"/>
<polygon points="843.0,339.4 885.2,346.4 881.8,373.1 839.6,365.8" fill="#717171" stroke="#333" stroke-width="0.5" stroke-linejoin="round"/>
<line x1="842.7" y1="341.6" x2="884.9" y2="348.6" stroke="#7f7f7f" stroke-width="0.7" stroke-linecap="butt"/>
<polygon points="838.0,339.2 815.5,338.3 812.8,359.6 834.7,364.7" fill="#b8b8b8" stroke="#262626" stroke-width="1.0" stroke-linejoin="round"/>
<polygon points="843.0,339.4 838.0,339.2 834.7,364.7 839.6,365.8" fill="#c3c3c3" stroke="#4a4a4a" stroke-width="0.5" stroke-linejoin="round"/>
<line x1="836.4" y1="339.3" x2="833.2" y2="364.1" stroke="#8a8a8a" stroke-width="0.6" stroke-linecap="round"/>
<line x1="842.9" y1="339.9" x2="885.1" y2="346.9" stroke="#272727" stroke-width="2.5" stroke-linecap="butt"/>
<polygon points="821.7,344.1 830.7,345.3 829.2,357.2 820.2,356.0" fill="#d2d2d2" stroke="#262626" stroke-width="1.3" stroke-linejoin="round"/>
<line x1="821.5" y1="351.6" x2="829.0" y2="352.6" stroke="#3a3a3a" stroke-width="1.4" stroke-linecap="butt"/>
<line x1="821.2" y1="353.8" x2="828.7" y2="354.8" stroke="#9a9a9a" stroke-width="1.2" stroke-linecap="butt"/>
<polygon points="839.7,366.1 881.9,373.4 877.6,400.0 835.4,392.5" fill="#707070" stroke="#333" stroke-width="0.5" stroke-linejoin="round"/>
<line x1="839.3" y1="368.3" x2="881.5" y2="375.6" stroke="#7e7e7e" stroke-width="0.7" stroke-linecap="butt"/>
<polygon points="834.7,365.8 812.3,364.0 808.9,385.2 830.5,391.2" fill="#b8b8b8" stroke="#262626" stroke-width="1.0" stroke-linejoin="round"/>
<polygon points="839.7,366.1 834.7,365.8 830.5,391.2 835.4,392.5" fill="#c3c3c3" stroke="#4a4a4a" stroke-width="0.5" stroke-linejoin="round"/>
<line x1="833.1" y1="365.8" x2="829.2" y2="390.5" stroke="#8a8a8a" stroke-width="0.6" stroke-linecap="round"/>
<line x1="839.6" y1="366.6" x2="881.8" y2="373.9" stroke="#272727" stroke-width="2.5" stroke-linecap="butt"/>
<polygon points="818.3,370.1 827.2,371.7 825.3,383.4 816.4,381.9" fill="#d2d2d2" stroke="#262626" stroke-width="1.3" stroke-linejoin="round"/>
<line x1="817.8" y1="377.5" x2="825.3" y2="378.8" stroke="#3a3a3a" stroke-width="1.4" stroke-linecap="butt"/>
<line x1="817.5" y1="379.7" x2="825.0" y2="381.0" stroke="#9a9a9a" stroke-width="1.2" stroke-linecap="butt"/>
<polygon points="835.5,392.8 877.7,400.3 872.6,426.7 830.4,418.9" fill="#707070" stroke="#333" stroke-width="0.5" stroke-linejoin="round"/>
<line x1="835.1" y1="395.0" x2="877.3" y2="402.5" stroke="#7e7e7e" stroke-width="0.7" stroke-linecap="butt"/>
<polygon points="830.5,392.2 808.2,389.7 804.1,410.7 825.6,417.5" fill="#b8b8b8" stroke="#262626" stroke-width="1.0" stroke-linejoin="round"/>
<polygon points="835.5,392.8 830.5,392.2 825.6,417.5 830.4,418.9" fill="#c3c3c3" stroke="#4a4a4a" stroke-width="0.5" stroke-linejoin="round"/>
<line x1="829.0" y1="392.2" x2="824.2" y2="416.8" stroke="#8a8a8a" stroke-width="0.6" stroke-linecap="round"/>
<line x1="835.4" y1="393.3" x2="877.6" y2="400.8" stroke="#272727" stroke-width="2.5" stroke-linecap="butt"/>
<polygon points="814.0,395.9 822.9,397.8 820.6,409.5 811.7,407.6" fill="#d2d2d2" stroke="#262626" stroke-width="1.3" stroke-linejoin="round"/>
<line x1="813.3" y1="403.3" x2="820.8" y2="404.9" stroke="#3a3a3a" stroke-width="1.4" stroke-linecap="butt"/>
<line x1="812.9" y1="405.5" x2="820.3" y2="407.1" stroke="#9a9a9a" stroke-width="1.2" stroke-linecap="butt"/>
<polygon points="830.5,419.3 872.7,427.1 866.6,453.0 824.4,445.2" fill="#6f6f6f" stroke="#333" stroke-width="0.5" stroke-linejoin="round"/>
<line x1="830.0" y1="421.4" x2="872.2" y2="429.2" stroke="#7d7d7d" stroke-width="0.7" stroke-linecap="butt"/>
<polygon points="825.6,418.5 803.4,414.8 798.5,435.7 819.6,443.5" fill="#b8b8b8" stroke="#262626" stroke-width="1.0" stroke-linejoin="round"/>
<polyline points="824.7,418.2 803.4,414.8 798.5,435.7" fill="none" stroke="#2a2a2a" stroke-width="0.82" stroke-linejoin="round" stroke-linecap="round"/>
<polygon points="830.5,419.3 825.6,418.5 819.6,443.5 824.4,445.2" fill="#c3c3c3" stroke="#4a4a4a" stroke-width="0.5" stroke-linejoin="round"/>
<line x1="824.0" y1="418.4" x2="818.3" y2="442.7" stroke="#8a8a8a" stroke-width="0.6" stroke-linecap="round"/>
<line x1="830.4" y1="419.8" x2="872.6" y2="427.6" stroke="#272727" stroke-width="2.5" stroke-linecap="butt"/>
<polygon points="808.9,421.4 817.7,423.7 815.0,435.3 806.2,433.0" fill="#d2d2d2" stroke="#262626" stroke-width="1.3" stroke-linejoin="round"/>
<line x1="807.9" y1="428.8" x2="815.3" y2="430.7" stroke="#3a3a3a" stroke-width="1.4" stroke-linecap="butt"/>
<line x1="807.4" y1="430.9" x2="814.8" y2="432.9" stroke="#9a9a9a" stroke-width="1.2" stroke-linecap="butt"/>
<polygon points="824.7,445.8 866.9,453.6 859.5,479.2 817.3,471.3" fill="#6f6f6f" stroke="#333" stroke-width="0.5" stroke-linejoin="round"/>
<line x1="824.1" y1="447.9" x2="866.3" y2="455.7" stroke="#7d7d7d" stroke-width="0.7" stroke-linecap="butt"/>
<polygon points="819.8,444.7 797.9,439.8 791.9,460.3 812.7,469.4" fill="#b8b8b8" stroke="#262626" stroke-width="1.0" stroke-linejoin="round"/>
<polyline points="818.9,444.4 797.9,439.8 791.9,460.3" fill="none" stroke="#2a2a2a" stroke-width="0.94" stroke-linejoin="round" stroke-linecap="round"/>
<polygon points="824.7,445.8 819.8,444.7 812.7,469.4 817.3,471.3" fill="#c3c3c3" stroke="#4a4a4a" stroke-width="0.5" stroke-linejoin="round"/>
<line x1="818.3" y1="444.5" x2="811.4" y2="468.5" stroke="#8a8a8a" stroke-width="0.6" stroke-linecap="round"/>
<line x1="824.6" y1="446.3" x2="866.8" y2="454.1" stroke="#272727" stroke-width="2.5" stroke-linecap="butt"/>
<polygon points="803.0,446.7 811.7,449.5 808.4,460.9 799.7,458.1" fill="#d2d2d2" stroke="#262626" stroke-width="1.3" stroke-linejoin="round"/>
<line x1="801.7" y1="454.0" x2="809.0" y2="456.3" stroke="#3a3a3a" stroke-width="1.4" stroke-linecap="butt"/>
<line x1="801.1" y1="456.1" x2="808.4" y2="458.5" stroke="#9a9a9a" stroke-width="1.2" stroke-linecap="butt"/>
<polygon points="817.6,471.9 859.8,479.8 851.4,505.0 809.2,497.1" fill="#6e6e6e" stroke="#333" stroke-width="0.5" stroke-linejoin="round"/>
<line x1="816.9" y1="474.0" x2="859.1" y2="481.9" stroke="#7c7c7c" stroke-width="0.7" stroke-linecap="butt"/>
<polygon points="812.8,470.6 791.1,464.7 784.3,484.9 804.7,495.0" fill="#b8b8b8" stroke="#262626" stroke-width="1.0" stroke-linejoin="round"/>
<polyline points="811.9,470.3 791.1,464.7 784.3,484.9" fill="none" stroke="#2a2a2a" stroke-width="1.04" stroke-linejoin="round" stroke-linecap="round"/>
<polygon points="817.6,471.9 812.8,470.6 804.7,495.0 809.2,497.1" fill="#c3c3c3" stroke="#4a4a4a" stroke-width="0.5" stroke-linejoin="round"/>
<line x1="811.3" y1="470.4" x2="803.4" y2="494.1" stroke="#8a8a8a" stroke-width="0.6" stroke-linecap="round"/>
<line x1="817.5" y1="472.4" x2="859.7" y2="480.3" stroke="#272727" stroke-width="2.5" stroke-linecap="butt"/>
<polygon points="796.0,471.8 804.5,475.0 800.8,486.3 792.2,483.1" fill="#d2d2d2" stroke="#262626" stroke-width="1.3" stroke-linejoin="round"/>
<line x1="794.4" y1="479.0" x2="801.5" y2="481.7" stroke="#3a3a3a" stroke-width="1.4" stroke-linecap="butt"/>
<line x1="793.7" y1="481.1" x2="800.8" y2="483.8" stroke="#9a9a9a" stroke-width="1.2" stroke-linecap="butt"/>
<polygon points="809.4,497.3 851.6,505.2 842.1,530.0 799.9,522.0" fill="#6d6d6d" stroke="#333" stroke-width="0.5" stroke-linejoin="round"/>
<line x1="808.6" y1="499.4" x2="850.8" y2="507.3" stroke="#7b7b7b" stroke-width="0.7" stroke-linecap="butt"/>
<polygon points="804.6,495.8 783.3,488.6 775.6,508.4 795.4,519.6" fill="#b8b8b8" stroke="#262626" stroke-width="1.0" stroke-linejoin="round"/>
<polyline points="803.8,495.4 783.3,488.6 775.6,508.4" fill="none" stroke="#2a2a2a" stroke-width="1.16" stroke-linejoin="round" stroke-linecap="round"/>
<polygon points="809.4,497.3 804.6,495.8 795.4,519.6 799.9,522.0" fill="#c3c3c3" stroke="#4a4a4a" stroke-width="0.5" stroke-linejoin="round"/>
<line x1="803.2" y1="495.4" x2="794.2" y2="518.6" stroke="#8a8a8a" stroke-width="0.6" stroke-linecap="round"/>
<line x1="809.2" y1="497.8" x2="851.4" y2="505.7" stroke="#272727" stroke-width="2.5" stroke-linecap="butt"/>
<polygon points="787.8,496.0 796.2,499.7 791.9,510.7 783.5,507.0" fill="#d2d2d2" stroke="#262626" stroke-width="1.3" stroke-linejoin="round"/>
<line x1="785.9" y1="503.1" x2="792.9" y2="506.2" stroke="#3a3a3a" stroke-width="1.4" stroke-linecap="butt"/>
<line x1="785.1" y1="505.2" x2="792.1" y2="508.3" stroke="#9a9a9a" stroke-width="1.2" stroke-linecap="butt"/>
<polygon points="800.0,522.2 842.2,530.2 831.3,554.3 789.1,546.3" fill="#6c6c6c" stroke="#333" stroke-width="0.5" stroke-linejoin="round"/>
<line x1="799.1" y1="524.2" x2="841.3" y2="532.2" stroke="#7a7a7a" stroke-width="0.7" stroke-linecap="butt"/>
<polygon points="795.3,520.3 774.5,511.8 765.7,531.1 784.8,543.6" fill="#b8b8b8" stroke="#262626" stroke-width="1.0" stroke-linejoin="round"/>
<polyline points="794.5,519.9 774.5,511.8 765.7,531.1" fill="none" stroke="#2a2a2a" stroke-width="1.30" stroke-linejoin="round" stroke-linecap="round"/>
<polygon points="800.0,522.2 795.3,520.3 784.8,543.6 789.1,546.3" fill="#c3c3c3" stroke="#4a4a4a" stroke-width="0.5" stroke-linejoin="round"/>
<line x1="793.9" y1="519.9" x2="783.6" y2="542.5" stroke="#8a8a8a" stroke-width="0.6" stroke-linecap="round"/>
<line x1="799.8" y1="522.7" x2="842.0" y2="530.6" stroke="#272727" stroke-width="2.5" stroke-linecap="butt"/>
<polygon points="778.6,519.5 786.7,523.7 781.8,534.5 773.7,530.2" fill="#d2d2d2" stroke="#262626" stroke-width="1.3" stroke-linejoin="round"/>
<line x1="776.2" y1="526.5" x2="783.0" y2="530.0" stroke="#3a3a3a" stroke-width="1.4" stroke-linecap="butt"/>
<line x1="775.3" y1="528.5" x2="782.1" y2="532.0" stroke="#9a9a9a" stroke-width="1.2" stroke-linecap="butt"/>
<polygon points="789.3,546.5 831.5,554.5 819.0,577.7 776.8,569.7" fill="#6a6a6a" stroke="#333" stroke-width="0.5" stroke-linejoin="round"/>
<line x1="788.2" y1="548.4" x2="830.4" y2="556.4" stroke="#787878" stroke-width="0.7" stroke-linecap="butt"/>
<polygon points="784.7,544.2 764.5,534.1 754.5,552.7 772.7,566.6" fill="#b8b8b8" stroke="#262626" stroke-width="1.0" stroke-linejoin="round"/>
<polyline points="783.9,543.7 764.5,534.1 754.5,552.7" fill="none" stroke="#2a2a2a" stroke-width="1.46" stroke-linejoin="round" stroke-linecap="round"/>
<polygon points="789.3,546.5 784.7,544.2 772.7,566.6 776.8,569.7" fill="#c3c3c3" stroke="#4a4a4a" stroke-width="0.5" stroke-linejoin="round"/>
<line x1="783.3" y1="543.7" x2="771.6" y2="565.5" stroke="#8a8a8a" stroke-width="0.6" stroke-linecap="round"/>
<line x1="789.0" y1="546.9" x2="831.2" y2="554.9" stroke="#272727" stroke-width="2.5" stroke-linecap="butt"/>
<polygon points="768.1,542.1 775.9,547.0 770.4,557.3 762.5,552.4" fill="#d2d2d2" stroke="#262626" stroke-width="1.3" stroke-linejoin="round"/>
<line x1="765.3" y1="548.9" x2="771.8" y2="553.0" stroke="#3a3a3a" stroke-width="1.4" stroke-linecap="butt"/>
<line x1="764.2" y1="550.8" x2="770.8" y2="554.9" stroke="#9a9a9a" stroke-width="1.2" stroke-linecap="butt"/>
<polygon points="777.0,569.9 819.2,577.9 805.3,600.1 763.1,592.1" fill="#686868" stroke="#333" stroke-width="0.5" stroke-linejoin="round"/>
<line x1="775.9" y1="571.7" x2="818.1" y2="579.7" stroke="#767676" stroke-width="0.7" stroke-linecap="butt"/>
<polygon points="772.6,567.3 753.1,555.6 742.0,573.5 759.2,588.7" fill="#b8b8b8" stroke="#262626" stroke-width="1.0" stroke-linejoin="round"/>
<polyline points="771.9,566.7 753.1,555.6 742.0,573.5" fill="none" stroke="#2a2a2a" stroke-width="1.62" stroke-linejoin="round" stroke-linecap="round"/>
<polygon points="777.0,569.9 772.6,567.3 759.2,588.7 763.1,592.1" fill="#c3c3c3" stroke="#4a4a4a" stroke-width="0.5" stroke-linejoin="round"/>
<line x1="771.3" y1="566.6" x2="758.2" y2="587.5" stroke="#8a8a8a" stroke-width="0.6" stroke-linecap="round"/>
<line x1="776.8" y1="570.3" x2="819.0" y2="578.3" stroke="#272727" stroke-width="2.5" stroke-linecap="butt"/>
<polygon points="756.2,563.9 763.7,569.3 757.5,579.3 750.0,573.8" fill="#d2d2d2" stroke="#262626" stroke-width="1.3" stroke-linejoin="round"/>
<line x1="753.0" y1="570.5" x2="759.2" y2="575.0" stroke="#3a3a3a" stroke-width="1.4" stroke-linecap="butt"/>
<line x1="751.8" y1="572.3" x2="758.1" y2="576.9" stroke="#9a9a9a" stroke-width="1.2" stroke-linecap="butt"/>
<polygon points="763.3,592.3 805.5,600.3 789.9,621.2 747.7,613.1" fill="#666666" stroke="#333" stroke-width="0.5" stroke-linejoin="round"/>
<line x1="762.0" y1="594.0" x2="804.2" y2="602.1" stroke="#747474" stroke-width="0.7" stroke-linecap="butt"/>
<polygon points="759.2,589.3 740.7,575.8 728.2,592.5 744.1,609.4" fill="#b8b8b8" stroke="#262626" stroke-width="1.0" stroke-linejoin="round"/>
<polyline points="758.4,588.7 740.7,575.8 728.2,592.5" fill="none" stroke="#2a2a2a" stroke-width="1.80" stroke-linejoin="round" stroke-linecap="round"/>
<polygon points="763.3,592.3 759.2,589.3 744.1,609.4 747.7,613.1" fill="#c3c3c3" stroke="#4a4a4a" stroke-width="0.5" stroke-linejoin="round"/>
<line x1="757.8" y1="588.5" x2="743.2" y2="608.1" stroke="#8a8a8a" stroke-width="0.6" stroke-linecap="round"/>
<line x1="763.0" y1="592.7" x2="805.2" y2="600.7" stroke="#272727" stroke-width="2.5" stroke-linecap="butt"/>
<polygon points="743.1,584.3 750.1,590.5 743.1,599.8 736.1,593.6" fill="#d2d2d2" stroke="#262626" stroke-width="1.3" stroke-linejoin="round"/>
<line x1="739.3" y1="590.6" x2="745.2" y2="595.7" stroke="#3a3a3a" stroke-width="1.4" stroke-linecap="butt"/>
<line x1="738.0" y1="592.3" x2="743.9" y2="597.5" stroke="#9a9a9a" stroke-width="1.2" stroke-linecap="butt"/>
<polygon points="747.7,613.1 789.9,621.2 772.6,640.4 730.4,632.3" fill="#626262" stroke="#333" stroke-width="0.5" stroke-linejoin="round"/>
<line x1="746.3" y1="614.7" x2="788.5" y2="622.8" stroke="#707070" stroke-width="0.7" stroke-linecap="butt"/>
<polygon points="743.9,609.7 726.7,594.3 712.8,609.7 727.1,628.2" fill="#b8b8b8" stroke="#262626" stroke-width="1.0" stroke-linejoin="round"/>
<polyline points="743.2,609.0 726.7,594.3 712.8,609.7" fill="none" stroke="#2a2a2a" stroke-width="1.80" stroke-linejoin="round" stroke-linecap="round"/>
<polygon points="747.7,613.1 743.9,609.7 727.1,628.2 730.4,632.3" fill="#c3c3c3" stroke="#4a4a4a" stroke-width="0.5" stroke-linejoin="round"/>
<line x1="742.6" y1="608.8" x2="726.4" y2="626.8" stroke="#8a8a8a" stroke-width="0.6" stroke-linecap="round"/>
<line x1="747.4" y1="613.5" x2="789.6" y2="621.6" stroke="#272727" stroke-width="2.5" stroke-linecap="butt"/>
<polygon points="728.3,603.1 734.8,610.0 727.0,618.5 720.6,611.6" fill="#d2d2d2" stroke="#262626" stroke-width="1.3" stroke-linejoin="round"/>
<line x1="724.1" y1="608.9" x2="729.4" y2="614.7" stroke="#3a3a3a" stroke-width="1.4" stroke-linecap="butt"/>
<line x1="722.6" y1="610.5" x2="728.0" y2="616.3" stroke="#9a9a9a" stroke-width="1.2" stroke-linecap="butt"/>
<polygon points="730.4,632.3 772.6,640.4 753.3,657.2 711.1,649.1" fill="#5e5e5e" stroke="#333" stroke-width="0.5" stroke-linejoin="round"/>
<line x1="728.8" y1="633.7" x2="771.0" y2="641.8" stroke="#6c6c6c" stroke-width="0.7" stroke-linecap="butt"/>
<polygon points="727.0,628.4 711.7,610.8 696.2,624.3 708.3,644.6" fill="#b8b8b8" stroke="#262626" stroke-width="1.0" stroke-linejoin="round"/>
<polyline points="726.4,627.6 711.7,610.8 696.2,624.3" fill="none" stroke="#2a2a2a" stroke-width="1.80" stroke-linejoin="round" stroke-linecap="round"/>
<polygon points="730.4,632.3 727.0,628.4 708.3,644.6 711.1,649.1" fill="#c3c3c3" stroke="#4a4a4a" stroke-width="0.5" stroke-linejoin="round"/>
<line x1="725.8" y1="627.3" x2="707.7" y2="643.1" stroke="#8a8a8a" stroke-width="0.6" stroke-linecap="round"/>
<line x1="730.1" y1="632.6" x2="772.3" y2="640.7" stroke="#272727" stroke-width="2.5" stroke-linecap="butt"/>
<polygon points="712.3,619.7 717.9,627.4 709.3,634.9 703.7,627.2" fill="#d2d2d2" stroke="#262626" stroke-width="1.3" stroke-linejoin="round"/>
<line x1="707.4" y1="625.0" x2="712.1" y2="631.4" stroke="#3a3a3a" stroke-width="1.4" stroke-linecap="butt"/>
<line x1="705.8" y1="626.4" x2="710.5" y2="632.8" stroke="#9a9a9a" stroke-width="1.2" stroke-linecap="butt"/>
<polygon points="711.1,649.1 753.3,657.2 731.6,669.9 689.4,661.8" fill="#565656" stroke="#333" stroke-width="0.5" stroke-linejoin="round"/>
<line x1="709.3" y1="650.1" x2="751.5" y2="658.3" stroke="#646464" stroke-width="0.7" stroke-linecap="butt"/>
<polygon points="708.4,644.5 696.3,624.1 678.9,634.3 687.4,656.8" fill="#b8b8b8" stroke="#262626" stroke-width="1.0" stroke-linejoin="round"/>
<polyline points="708.0,643.6 696.3,624.1 678.9,634.3" fill="none" stroke="#2a2a2a" stroke-width="1.80" stroke-linejoin="round" stroke-linecap="round"/>
<polygon points="711.1,649.1 708.4,644.5 687.4,656.8 689.4,661.8" fill="#c3c3c3" stroke="#4a4a4a" stroke-width="0.5" stroke-linejoin="round"/>
<line x1="707.5" y1="643.2" x2="687.0" y2="655.2" stroke="#8a8a8a" stroke-width="0.6" stroke-linecap="round"/>
<line x1="710.7" y1="649.3" x2="752.9" y2="657.4" stroke="#272727" stroke-width="2.5" stroke-linecap="butt"/>
<polygon points="695.5,633.1 699.7,641.8 690.0,647.4 685.8,638.7" fill="#d2d2d2" stroke="#262626" stroke-width="1.3" stroke-linejoin="round"/>
<line x1="689.8" y1="637.3" x2="693.3" y2="644.6" stroke="#3a3a3a" stroke-width="1.4" stroke-linecap="butt"/>
<line x1="688.0" y1="638.3" x2="691.5" y2="645.6" stroke="#9a9a9a" stroke-width="1.2" stroke-linecap="butt"/>
<polygon points="689.4,661.8 731.6,669.9 708.2,678.4 666.0,670.2" fill="#4e4e4e" stroke="#333" stroke-width="0.5" stroke-linejoin="round"/>
<line x1="687.4" y1="662.5" x2="729.6" y2="670.6" stroke="#5c5c5c" stroke-width="0.7" stroke-linecap="butt"/>
<polygon points="687.4,656.8 678.8,634.4 660.1,641.1 664.9,664.9" fill="#b8b8b8" stroke="#262626" stroke-width="1.0" stroke-linejoin="round"/>
<polyline points="687.2,655.8 678.8,634.4 660.1,641.1" fill="none" stroke="#2a2a2a" stroke-width="1.80" stroke-linejoin="round" stroke-linecap="round"/>
<polygon points="689.4,661.8 687.4,656.8 664.9,664.9 666.0,670.2" fill="#c3c3c3" stroke="#4a4a4a" stroke-width="0.5" stroke-linejoin="round"/>
<line x1="686.7" y1="655.3" x2="664.8" y2="663.3" stroke="#8a8a8a" stroke-width="0.6" stroke-linecap="round"/>
<line x1="688.9" y1="661.9" x2="731.1" y2="670.1" stroke="#272727" stroke-width="2.5" stroke-linecap="butt"/>
<polygon points="676.6,643.0 679.3,652.4 668.9,656.2 666.1,646.8" fill="#d2d2d2" stroke="#262626" stroke-width="1.3" stroke-linejoin="round"/>
<line x1="670.3" y1="646.1" x2="672.6" y2="654.0" stroke="#3a3a3a" stroke-width="1.4" stroke-linecap="butt"/>
<line x1="668.4" y1="646.8" x2="670.7" y2="654.7" stroke="#9a9a9a" stroke-width="1.2" stroke-linecap="butt"/>
</svg>
<svg class="abs" style="left:1280px;top:60px" width="53" height="52" viewBox="1280 60 53 52">
<g fill="#f2f2f2" stroke="#9a9a9a" stroke-width="0.7">
<path d="M1304.5 67.5 L1308.5 62.5 L1312.5 67.5 Z"/>
<path d="M1304.5 103.5 L1308.5 108.5 L1312.5 103.5 Z"/>
<path d="M1290.5 81 L1285.5 85 L1290.5 89.5 Z"/>
<path d="M1326.5 81 L1331.8 85 L1326.5 89.5 Z"/>
<path d="M1291 74.5 L1291.2 70 Q1296 66 1302.5 64.8 L1302.5 67.4 Q1297.5 68.4 1294.2 71.4 L1295.4 74.6 Z"/>
<path d="M1326 74.5 L1325.8 70 Q1321 66 1314.5 64.8 L1314.5 67.4 Q1319.5 68.4 1322.8 71.4 L1321.6 74.6 Z"/>
<circle cx="1328.3" cy="65.2" r="2.3"/>
<path d="M1320.5 100 L1320.5 104 Q1324 106.4 1327.6 104 L1327.6 100 Q1324 97.6 1320.5 100 Z"/>
</g>
<path d="M1320.5 100 Q1324 102.4 1327.6 100" fill="none" stroke="#9a9a9a" stroke-width="0.6"/>
<rect x="1294.6" y="73.4" width="28" height="24.4" rx="6.5" fill="#e9ebf2" stroke="#8c8c8c" stroke-width="0.8"/>
<rect x="1296" y="75" width="14" height="20.6" rx="2" fill="#e6e9f4" stroke="#9c9c9c" stroke-width="0.6"/>
<rect x="1311" y="78" width="3.6" height="14" fill="#f4f4f8" stroke="#9c9c9c" stroke-width="0.6"/>
<circle cx="1311.6" cy="76.2" r="2.1" fill="#f4f4f8" stroke="#a4a4a4" stroke-width="0.5"/>
<circle cx="1311.6" cy="94.6" r="2.1" fill="#f4f4f8" stroke="#a4a4a4" stroke-width="0.5"/>
<line x1="1318.2" y1="78" x2="1318.2" y2="93" stroke="#8c8c8c" stroke-width="1.2" stroke-dasharray="1.2 0.8"/>
<text x="1303.6" y="86.6" font-family="Liberation Sans, sans-serif" font-size="5.4" fill="#555" text-anchor="middle">TOP</text>
<line x1="1304.3" y1="80.6" x2="1304.3" y2="98" stroke="#3fe05a" stroke-width="0.9"/>
<line x1="1304.3" y1="98.2" x2="1318.6" y2="98" stroke="#f03a3a" stroke-width="1"/>
<line x1="1304.3" y1="98.2" x2="1295" y2="96.8" stroke="#2b2bf0" stroke-width="1"/>
</svg>
<svg class="abs" style="left:1280px;top:648px" width="53" height="40" viewBox="1280 648 53 40">
<line x1="1301.3" y1="676.2" x2="1301.3" y2="661" stroke="#0e8a1a" stroke-width="1.1"/>
<path d="M1301.3 655.2 L1298.9 662.6 L1303.8 662.6 Z" fill="#0e7d18"/>
<line x1="1301.3" y1="676.2" x2="1316" y2="675.8" stroke="#8c1414" stroke-width="1.1"/>
<path d="M1323.4 675.5 L1315.2 672.8 L1315.2 678.6 Z" fill="#7e0f0f"/>
<line x1="1301.3" y1="676.2" x2="1294" y2="675" stroke="#1a1a8c" stroke-width="1.1"/>
<path d="M1287.2 673.8 L1292.4 671.8 L1295.2 675.2 L1292 678 Z" fill="#14147e"/>
<text x="1302.6" y="654.4" font-family="Liberation Sans, sans-serif" font-size="3.6" fill="#222" text-anchor="middle">Y</text>
<text x="1325.2" y="675.2" font-family="Liberation Sans, sans-serif" font-size="3.6" fill="#222" text-anchor="middle">X</text>
<text x="1287.8" y="673" font-family="Liberation Sans, sans-serif" font-size="3.6" fill="#222" text-anchor="middle">Z</text>
</svg>
<div id="left" class="abs"></div>
<div id="cvtitle" class="abs">Combo View</div>
<div id="pane" class="abs"></div>
<svg width="0" height="0" style="position:absolute"><defs>
<linearGradient id="gBlue" x1="0" y1="0" x2="0" y2="1"><stop offset="0" stop-color="#5b9be0"/><stop offset="1" stop-color="#1f5fae"/></linearGradient>
<symbol id="chk" viewBox="0 0 10 10"><circle cx="5" cy="5" r="4.4" fill="#1b38e8"/><path d="M2.6 5.2 L4.4 7 L7.6 3" fill="none" stroke="#fff" stroke-width="1.6" stroke-linecap="round" stroke-linejoin="round"/></symbol>
<symbol id="icBox" viewBox="0 0 14 14"><path d="M1.4 4.4 L9 3.6 L9 11.8 L1.4 12.6 Z" fill="#2f73c4"/><path d="M9 3.6 L11.6 2.4 L11.6 10 L9 11.8 Z" fill="#1b4f94"/><path d="M1.4 4.4 L4.4 3 L11.6 2.4 L9 3.6 Z" fill="#7fb2ea"/><use href="#chk" x="5.6" y="0" width="7.6" height="7.6"/></symbol>
<symbol id="icPart" viewBox="0 0 14 14"><path d="M1 7 L4.5 4.6 L9 5.6 L11.5 7.8 L11.5 10.6 L7.4 13 L1.6 11.4 Z" fill="#f2d21f" stroke="#8a6d00" stroke-width="0.7"/><path d="M1 7 L6.6 8.6 L11.5 7.8 M6.6 8.6 L7.4 13" fill="none" stroke="#8a6d00" stroke-width="0.6"/><circle cx="4" cy="10" r="0.7" fill="#8a6d00"/><circle cx="9.4" cy="10.4" r="0.7" fill="#8a6d00"/><use href="#chk" x="5.6" y="0" width="8" height="8"/></symbol>
<symbol id="icOrigin" viewBox="0 0 14 14"><line x1="1" y1="13" x2="8" y2="6" stroke="#d4303a" stroke-width="1.2"/><use href="#chk" x="5.6" y="0.4" width="8" height="8"/></symbol>
<symbol id="icDoc" viewBox="0 0 14 14"><rect x="1.5" y="1" width="10.5" height="12.4" fill="#f4f4f4" stroke="#9a9a9a" stroke-width="0.6"/><path d="M3 6.4 L8.2 5.6 L8.2 12 L3 12.6 Z" fill="#2f73c4"/><path d="M8.2 5.6 L10.6 4.6 L10.6 10.6 L8.2 12 Z" fill="#1b4f94"/><path d="M3 6.4 L5.4 5 L10.6 4.6 L8.2 5.6 Z" fill="#7fb2ea"/><circle cx="8.6" cy="4" r="2.9" fill="#e5141c"/></symbol>
<symbol id="arD" viewBox="0 0 8 8"><path d="M1 2.5 L4 5.5 L7 2.5" fill="none" stroke="#8a8a8a" stroke-width="1"/></symbol>
<symbol id="arR" viewBox="0 0 8 8"><path d="M2.5 1 L5.5 4 L2.5 7" fill="none" stroke="#8a8a8a" stroke-width="1"/></symbol>
</defs></svg>
<svg class="abs" style="left:0;top:61px" width="26" height="13" viewBox="0 0 26 13"><circle cx="5.7" cy="6.3" r="4.6" fill="#4e4e4e"/><path d="M3.7 4.3 L7.7 8.3 M7.7 4.3 L3.7 8.3" stroke="#ececec" stroke-width="1.5"/><circle cx="18.3" cy="6.3" r="4.6" fill="#4e4e4e"/><rect x="16" y="5.6" width="3.4" height="2.8" fill="none" stroke="#e4e4e4" stroke-width="0.9"/><path d="M17.4 4.2 H20.6 V6.8" fill="none" stroke="#e4e4e4" stroke-width="0.9"/></svg>
<div class="seg on" style="left:52px;top:76px;width:41px;padding-right:2.8px;border-radius:3.5px 0 0 3.5px">Model</div>
<div class="seg" style="left:93px;top:76px;width:39.5px;padding-left:2px;border-radius:0 3.5px 3.5px 0;box-shadow:0 0 0 0.5px #d8d8d8">Tasks</div>
<div id="tree" class="abs"><svg class="abs" style="left:3.0px;top:4.6px" width="8" height="8"><use href="#arD"/></svg><svg class="abs" style="left:16.7px;top:2.1px" width="13" height="13"><use href="#icDoc"/></svg><div class="row" style="left:33.0px;top:1.6px;font-weight:bold;font-size:9.2px;margin-top:-0.6px;">Unnamed</div><svg class="abs" style="left:17.0px;top:18.4px" width="8" height="8"><use href="#arD"/></svg><svg class="abs" style="left:30.7px;top:15.9px" width="13" height="13"><use href="#icPart"/></svg><div class="row" style="left:47.0px;top:15.4px;">Open CASCADE STEP translator 7.8 1</div><svg class="abs" style="left:32.0px;top:32.3px" width="8" height="8"><use href="#arR"/></svg><svg class="abs" style="left:44.7px;top:29.8px" width="13" height="13"><use href="#icOrigin"/></svg><div class="row" style="left:61.0px;top:29.3px;color:#b5b5b5;font-size:9.5px;">Origin002</div><svg class="abs" style="left:32.0px;top:46.1px" width="8" height="8"><use href="#arR"/></svg><svg class="abs" style="left:44.7px;top:43.6px" width="13" height="13"><use href="#icPart"/></svg><div class="row" style="left:61.0px;top:43.1px;">Open CASCADE STEP translator 7.8 1</div><svg class="abs" style="left:44.7px;top:57.5px" width="13" height="13"><use href="#icBox"/></svg><div class="row" style="left:61.0px;top:57.0px;">Open CASCADE STEP translator 7.8 1</div><svg class="abs" style="left:44.7px;top:71.3px" width="13" height="13"><use href="#icBox"/></svg><div class="row" style="left:61.0px;top:70.8px;">Open CASCADE STEP translator 7.8 1</div><svg class="abs" style="left:44.7px;top:85.2px" width="13" height="13"><use href="#icBox"/></svg><div class="row" style="left:61.0px;top:84.7px;">Open CASCADE STEP translator 7.8 1</div><svg class="abs" style="left:44.7px;top:99.0px" width="13" height="13"><use href="#icBox"/></svg><div class="row" style="left:61.0px;top:98.5px;">Open CASCADE STEP translator 7.8 1</div><svg class="abs" style="left:44.7px;top:112.9px" width="13" height="13"><use href="#icBox"/></svg><div class="row" style="left:61.0px;top:112.4px;">Open CASCADE STEP translator 7.8 1</div><svg class="abs" style="left:44.7px;top:126.7px" width="13" height="13"><use href="#icBox"/></svg><div class="row" style="left:61.0px;top:126.2px;">Open CASCADE STEP translator 7.8 1</div><svg class="abs" style="left:44.7px;top:140.6px" width="13" height="13"><use href="#icBox"/></svg><div class="row" style="left:61.0px;top:140.1px;">Open CASCADE STEP translator 7.8 1</div><svg class="abs" style="left:44.7px;top:154.4px" width="13" height="13"><use href="#icBox"/></svg><div class="row" style="left:61.0px;top:153.9px;">Open CASCADE STEP translator 7.8 1</div><svg class="abs" style="left:44.7px;top:168.3px" width="13" height="13"><use href="#icBox"/></svg><div class="row" style="left:61.0px;top:167.8px;">Open CASCADE STEP translator 7.8 1</div><svg class="abs" style="left:44.7px;top:182.1px" width="13" height="13"><use href="#icBox"/></svg><div class="row" style="left:61.0px;top:181.6px;">Open CASCADE STEP translator 7.8 1</div><svg class="abs" style="left:44.7px;top:196.0px" width="13" height="13"><use href="#icBox"/></svg><div class="row" style="left:61.0px;top:195.5px;">Open CASCADE STEP translator 7.8 1</div><svg class="abs" style="left:44.7px;top:209.8px" width="13" height="13"><use href="#icBox"/></svg><div class="row" style="left:61.0px;top:209.3px;">Open CASCADE STEP translator 7.8 1</div><svg class="abs" style="left:44.7px;top:223.7px" width="13" height="13"><use href="#icBox"/></svg><div class="row" style="left:61.0px;top:223.2px;">Open CASCADE STEP translator 7.8 1</div><svg class="abs" style="left:44.7px;top:237.5px" width="13" height="13"><use href="#icBox"/></svg><div class="row" style="left:61.0px;top:237.0px;">Open CASCADE STEP translator 7.8 1</div><svg class="abs" style="left:44.7px;top:251.4px" width="13" height="13"><use href="#icBox"/></svg><div class="row" style="left:61.0px;top:250.9px;">Open CASCADE STEP translator 7.8 1</div><svg class="abs" style="left:44.7px;top:265.2px" width="13" height="13"><use href="#icBox"/></svg><div class="row" style="left:61.0px;top:264.8px;">Open CASCADE STEP translator 7.8 1</div><svg class="abs" style="left:44.7px;top:279.1px" width="13" height="13"><use href="#icBox"/></svg><div class="row" style="left:61.0px;top:278.6px;">Open CASCADE STEP translator 7.8 1</div></div>
<div class="abs" style="left:91px;top:382.5px;width:3px;height:3px;border-radius:2px;background:#d2d2d2"></div>
<div id="prop" class="abs"></div>
<div id="prophead" class="abs"><span class="abs" style="left:3.5px;top:0">Property</span><span class="abs" style="left:73px;top:0">Value</span><span class="abs" style="left:69.5px;top:2px;width:1px;height:9px;background:#cfcfcf"></span><span class="abs" style="left:175px;top:2px;width:1px;height:9px;background:#cfcfcf"></span></div>
<div class="seg" style="left:57px;top:707.2px;width:35px;border-radius:3.5px 0 0 3.5px;padding-right:2.4px;box-shadow:0 0 0 0.5px #d8d8d8">View</div>
<div class="seg on" style="left:92px;top:707.2px;width:35px;padding-left:1.6px;border-radius:0 3.5px 3.5px 0">Data</div>
<div id="mditabs" class="abs"></div>
<div class="abs" style="left:680px;top:709.5px;width:74px;height:14px;background:#fff;border-radius:3.5px 0 0 3.5px;box-shadow:0 0 0 0.5px #d4d4d4;font-size:9.48px;line-height:14.5px;color:#1c1c1c"><span class="abs" style="left:13.6px;top:0">Start page</span></div>
<div class="abs" style="left:754px;top:709.5px;width:87px;height:14px;background:#1583fc;border-radius:0 3.5px 3.5px 0;font-size:9.12px;line-height:14.5px;color:#fff"><span class="abs" style="left:16.6px;top:0">Unnamed : 1*</span></div>
<svg class="abs" style="left:682px;top:712px" width="90" height="10" viewBox="0 0 90 10"><path d="M1.6 1.8 L7 7.4 M7 1.8 L1.6 7.4" stroke="#3a3a3a" stroke-width="0.9"/><path d="M78 1.8 L83.4 7.4 M83.4 1.8 L78 7.4" stroke="#fff" stroke-width="1"/></svg>
<div id="status" class="abs"></div>
<div class="abs" style="left:1.5px;top:724px;height:26px;line-height:28px;font-size:9.36px;color:#1c1c1c;white-space:nowrap">Preselected: Unnamed.Open_CASCADE_STEP_translator_7_8_1.Part__Feature015.Face118 (-355.438934 mm, 13.358871 m, 11.669884 m)</div>
<svg class="abs" style="left:1112px;top:730px" width="14" height="14" viewBox="1112 730 14 14"><path d="M1122.3 733.9 Q1116 732.4 1114.7 737.3" fill="none" stroke="#333" stroke-width="1.5" stroke-linecap="round"/><path d="M1115.9 741.1 Q1122.2 742.6 1123.5 737.7" fill="none" stroke="#333" stroke-width="1.5" stroke-linecap="round"/><circle cx="1122.4" cy="733.9" r="1.5" fill="#222"/><circle cx="1115.8" cy="741.1" r="1.5" fill="#222"/></svg>
<div class="abs" style="left:1129px;top:724px;height:26px;line-height:28px;font-size:9.28px;color:#1c1c1c">Gesture</div>
<div class="abs" style="left:1202px;top:724px;height:26px;line-height:28px;font-size:9.48px;color:#1c1c1c;white-space:nowrap">15,57 m x 8820,07 mm</div>
</body></html>
